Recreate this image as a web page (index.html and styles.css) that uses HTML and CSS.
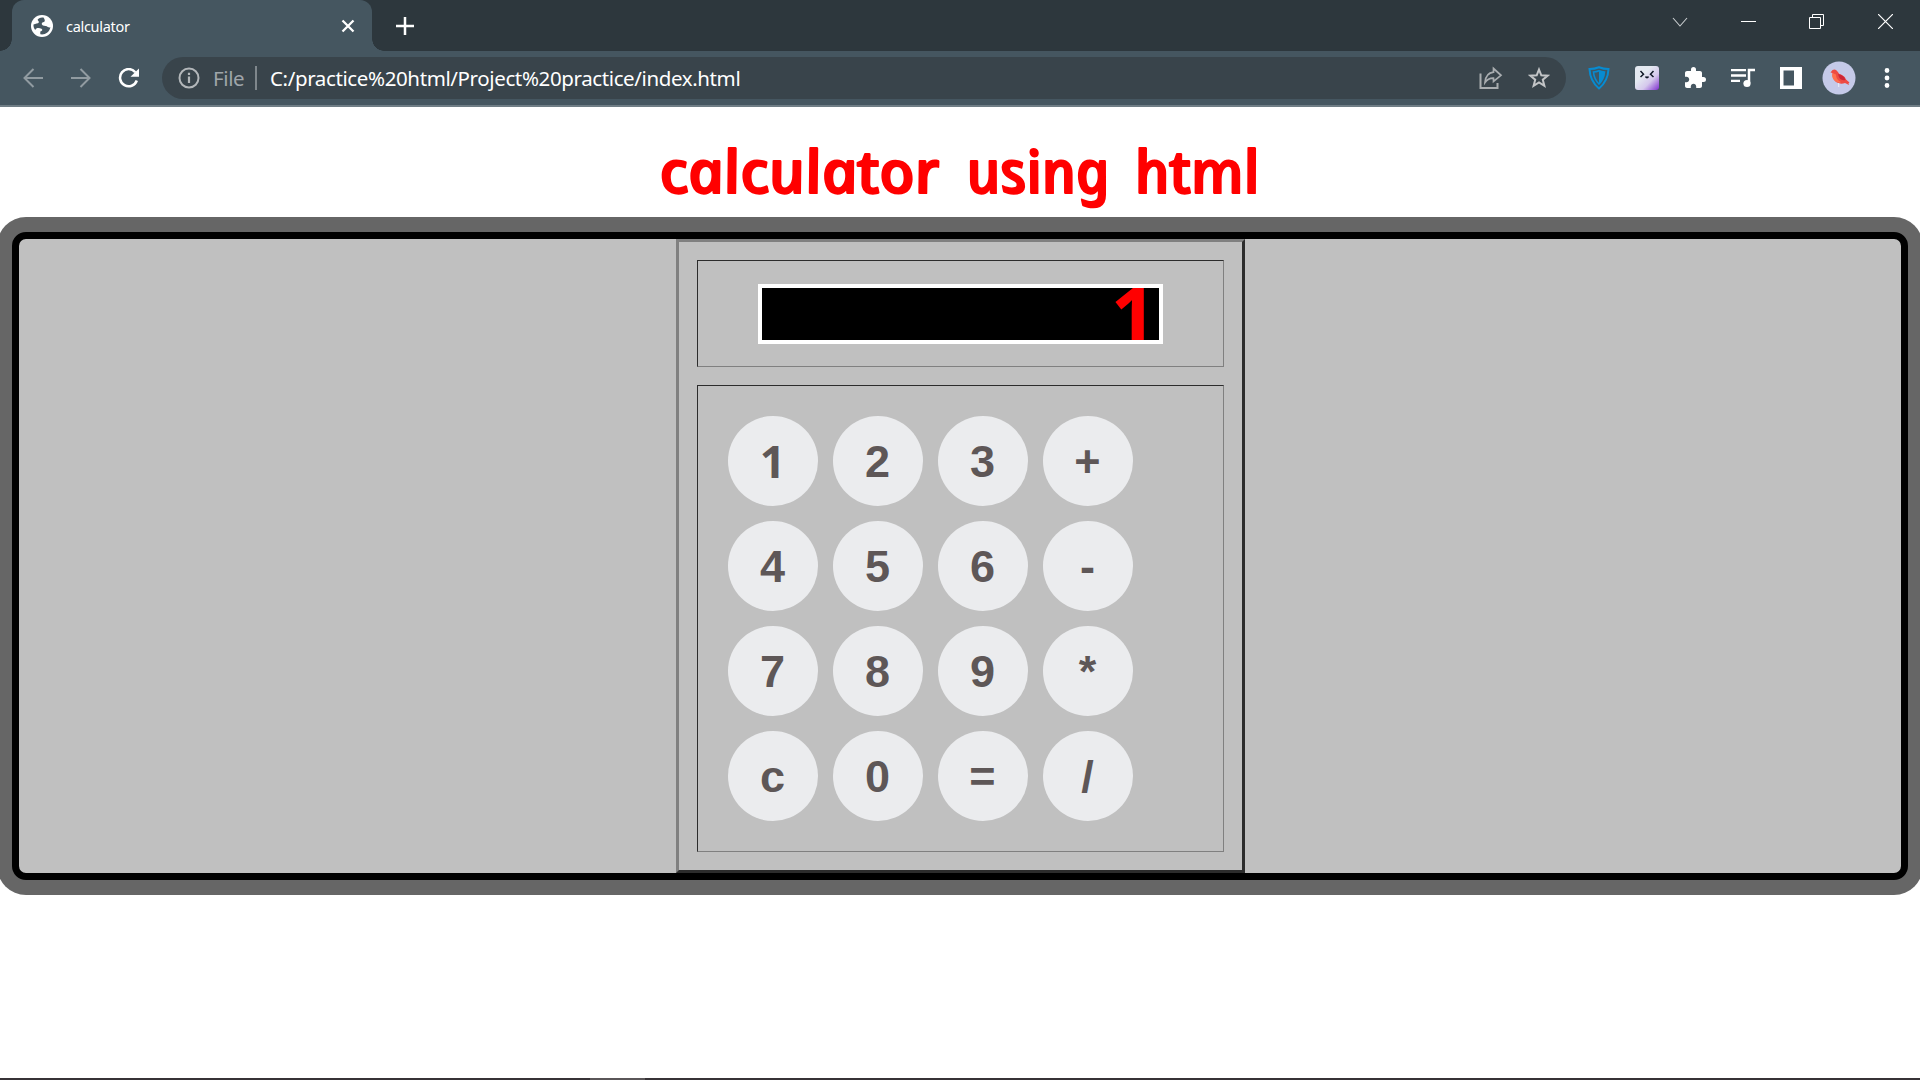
FILE: index.html
```html
<!DOCTYPE html>
<html lang="en">
<head>
<meta charset="utf-8">
<title>calculator</title>
<link rel="stylesheet" href="styles.css">
</head>
<body>
<div class="browser">
  <header class="tabstrip">
    <div class="tab">
      <svg class="globe" width="22" height="22" viewBox="0 0 22 22"><circle cx="11" cy="11" r="11" fill="#fff"/><path d="M12.5 2.6C9.5 2.2 7.2 3.400 6.600 4.800C6.900 6 8.200 6.200 7.800 7.500C7.200 8.900 4.500 8.400 2.500 9.500C2.300 11.500 3 13.500 4.200 15C5 12.600 8 12.400 10.500 13.800C12 14.800 11.300 16 9.300 16.600L9.300 19.300C14 20.200 18.500 17 19.400 12.200C17.700 12.800 16.800 12 15.800 11.300C14.300 10.600 12 11.500 10.900 9.600C10.300 8 11.500 7 13 6.900C14.300 6.700 14 4.500 12.500 2.600Z" fill="#455660"/></svg>
      <span class="tab-title">calculator</span>
      <svg class="tab-close" width="14" height="14" viewBox="0 0 14 14"><path d="M1.500 1.500L12.500 12.500M12.500 1.500L1.500 12.500" stroke="#fff" stroke-width="2.300"/></svg>
    </div>
    <svg class="new-tab" width="18" height="18" viewBox="0 0 18 18"><path d="M9 0V18M0 9H18" stroke="#fff" stroke-width="2.500"/></svg>
    <div class="window-controls">
      <span><svg width="16" height="16" viewBox="0 0 16 16"><path d="M1 4L8 12L15 4" fill="none" stroke="#c8cccf" stroke-width="1.100"/></svg></span>
      <span><svg width="15" height="15" viewBox="0 0 15 15"><path d="M0 7.500H15" stroke="#fff"/></svg></span>
      <span><svg width="15" height="15" viewBox="0 0 15 15"><path d="M.5 3.500H11.500V14.500H.5ZM3.500 3.500V.5H14.500V11.500H11.500" fill="none" stroke="#fff"/></svg></span>
      <span><svg width="15" height="15" viewBox="0 0 15 15"><path d="M0 0L15 15M15 0L0 15" stroke="#fff" stroke-width="1.200"/></svg></span>
    </div>
  </header>
  <nav class="toolbar">
    <span class="tool"><svg width="20" height="20" viewBox="0 0 20 20"><path d="M20 10H1.500M10.500 1L1.500 10L10.500 19" fill="none" stroke="#919ba1" stroke-width="2"/></svg></span>
    <span class="tool"><svg width="20" height="20" viewBox="0 0 20 20"><path d="M0 10H18.500M9.500 1L18.500 10L9.500 19" fill="none" stroke="#919ba1" stroke-width="2"/></svg></span>
    <span class="tool"><svg width="22" height="20" viewBox="0 0 22 20"><path d="M17.300 4.200A8.600 8.600 0 1 0 18.800 12.500" fill="none" stroke="#fff" stroke-width="2.500"/><path d="M21 .5V8.700H12.500Z" fill="#fff"/></svg></span>
    <div class="address">
      <span class="tool"><svg width="22" height="22" viewBox="0 0 22 22"><circle cx="11" cy="11" r="9.500" fill="none" stroke="#b3b7ba" stroke-width="2"/><path d="M11 9.500V16M11 5.700V8" stroke="#b3b7ba" stroke-width="2.200"/></svg></span>
      <span class="scheme">File</span>
      <span class="divider"></span>
      <span class="url">C:/practice%20html/Project%20practice/index.html</span>
      <span class="tool"><svg width="24" height="24" viewBox="0 0 24 24"><path d="M1.500 7.500V22H18.500V17" fill="none" stroke="#a9adb0" stroke-width="2"/><path d="M14.500 2.500L22 9.300L14.500 15.500V12.200C10 12 7.800 14 6 16.500C6.400 11.500 9 6.800 14.500 6.200Z" fill="none" stroke="#a9adb0" stroke-width="1.700"/></svg></span>
      <span class="tool"><svg width="22" height="22" viewBox="0 0 22 22"><path d="M11 2.500L13.300 8.300L19.600 8.700L14.800 12.700L16.400 18.900L11 15.500L5.600 18.900L7.200 12.700L2.400 8.700L8.700 8.300Z" fill="none" stroke="#c3c5c7" stroke-width="2"/></svg></span>
    </div>
    <span class="tool"><svg width="22" height="24" viewBox="0 0 22 24"><path d="M1.500 3Q6.500 3 11 1.200Q15.500 3 20.500 3Q20 15 11 22.500Q2 15 1.500 3Z" fill="#3c5766" stroke="#078bd1" stroke-width="2"/><path d="M5.500 6Q8.500 6 11 4.800Q13.500 6 16.500 6Q16 13 11 18Q6 13 5.500 6Z" fill="#3c5766" stroke="#078bd1" stroke-width="1.600"/><path d="M11 4.800Q13.500 6 16.500 6Q16 13 11 18Z" fill="#078bd1"/></svg></span>
    <span class="tool"><svg width="24" height="24" viewBox="0 0 24 24"><defs><linearGradient id="face" x1=".35" y1=".35" x2="1" y2="1"><stop offset="0" stop-color="#e4e9f1"/><stop offset=".45" stop-color="#d5c8ec"/><stop offset="1" stop-color="#7f2fd0"/></linearGradient></defs><rect width="24" height="24" rx="3" fill="url(#face)"/><path d="M5.500 5L8.500 8.200L5.500 11M18.500 5L15.500 8.200L18.500 11M10.500 10.500Q12 12.800 13.500 10.500" fill="none" stroke="#111827" stroke-width="1.500"/></svg></span>
    <span class="tool"><svg width="24" height="24" viewBox="0 0 24 24"><path d="M20.500 11H19V7c0-1.100-.9-2-2-2h-4V3.500a2.500 2.500 0 0 0-5 0V5H4c-1.100 0-1.990.9-1.990 2v3.800H3.500c1.490 0 2.700 1.210 2.700 2.700s-1.210 2.700-2.700 2.700H2V20c0 1.100.9 2 2 2h3.800v-1.500c0-1.490 1.210-2.700 2.700-2.700s2.700 1.210 2.700 2.700V22H17c1.100 0 2-.9 2-2v-4h1.500a2.500 2.500 0 0 0 0-5z" fill="#fff"/></svg></span>
    <span class="tool"><svg width="24" height="20" viewBox="0 0 24 20"><path d="M0 2.200H15M0 7.500H15M0 12.800H9" stroke="#fff" stroke-width="2.300"/><path d="M18 15V2H24" fill="none" stroke="#fff" stroke-width="2.500"/><circle cx="16" cy="15.500" r="3.600" fill="#fff"/></svg></span>
    <span class="tool"><svg width="22" height="22" viewBox="0 0 22 22"><path d="M0 0H22V22H0ZM3.500 3.500V18.500H14V3.500Z" fill="#fff" fill-rule="evenodd"/></svg></span>
    <span class="tool"><svg width="34" height="34" viewBox="0 0 34 34"><circle cx="17" cy="17" r="16.500" fill="#c5cae9"/><path d="M8.500 11.500L10.500 9Q13.500 7.500 15.500 10.500Q16.500 13 19.500 13.800Q23 15.500 24 18.500L27.500 21.500L26.500 22.200L27 24L23 22Q18.500 24 14 21Q10 18 10.500 12Z" fill="#ee4b43"/><path d="M10.500 12Q9 18 14.500 21Q18 22.500 19 21Q14 19 14 13.500Z" fill="#ff704f"/><path d="M16 13Q22 14 23.500 19Q17.500 20.500 16 13Z" fill="#cd2638"/><path d="M16.700 22V26" stroke="#ececf7"/></svg></span>
    <span class="tool"><svg width="6" height="22" viewBox="0 0 6 22"><path d="M3 3.500h0M3 11h0M3 18.500h0" stroke="#fff" stroke-width="4.800" stroke-linecap="round"/></svg></span>
  </nav>
  <main class="page">
    <svg class="heading" width="620" height="86" viewBox="650 131 620 86" role="heading"><g transform="translate(0 193) skewX(12)"><text x="663" textLength="280" lengthAdjust="spacingAndGlyphs">calculator</text><text x="970" textLength="143" lengthAdjust="spacingAndGlyphs">using</text><text x="1138" textLength="125" lengthAdjust="spacingAndGlyphs">html</text></g></svg>
    <div class="frame">
      <div class="calculator">
        <div class="cell display-cell"><div class="display">1</div></div>
        <div class="cell keys">
          <button>1</button><button>2</button><button>3</button><button>+</button>
          <button>4</button><button>5</button><button>6</button><button>-</button>
          <button>7</button><button>8</button><button>9</button><button>*</button>
          <button>c</button><button>0</button><button>=</button><button>/</button>
        </div>
      </div>
    </div>
  </main>
  <footer class="taskbar"><span></span></footer>
</div>
</body>
</html>
```
FILE: styles.css
```css
* { box-sizing: border-box; }
body { margin: 0; overflow: hidden; background: #fff; }
svg { display: block; flex: none; }
.browser { width: 1920px; height: 1080px; display: flex; flex-direction: column; font-family: "Noto Sans", sans-serif; }

.tabstrip { height: 51px; flex: none; display: flex; align-items: center; background: #2d373d; }
.tab { position: relative; width: 360px; height: 51px; margin-left: 12px; padding: 0 17px 0 19px; display: flex; align-items: center; background: #455660; border-radius: 12px 12px 0 0; color: #fff; font-size: 14.5px; }
.tab::before, .tab::after { content: ""; position: absolute; bottom: 0; width: 12px; height: 12px; }
.tab::before { left: -12px; background: radial-gradient(circle at 0 0, #2d373d 11.5px, #455660 12px); }
.tab::after { right: -12px; background: radial-gradient(circle at 100% 0, #2d373d 11.5px, #455660 12px); }
.tab-title { margin-left: 13px; letter-spacing: -.3px; flex: 1; }
.new-tab { margin-left: 24px; }
.window-controls { margin: 0 0 8px auto; display: flex; }
.window-controls span { width: 68.700px; height: 43px; display: flex; align-items: center; justify-content: center; }

.toolbar { height: 56px; flex: none; display: flex; align-items: center; padding: 0 9px; background: #455660; border-bottom: 2px solid #6f7d85; }
.tool { width: 48px; height: 42px; flex: none; display: flex; align-items: center; justify-content: center; }
.address { width: 1404px; height: 42px; margin: 0 9px; padding: 0 3px; border-radius: 21px; display: flex; align-items: center; background: #39444b; font-size: 20.500px; }
.scheme { width: 42px; color: #9fa5a9; letter-spacing: -.4px; }
.divider { width: 2px; height: 24px; background: #7f878c; }
.url { margin-left: 13px; flex: 1; color: #fff; letter-spacing: -.38px; white-space: nowrap; }

.page { flex: 1; display: flex; flex-direction: column; align-items: center; padding-top: 24px; }
.heading { overflow: visible; }
.heading text { font: italic 500 59px "Noto Sans", sans-serif; fill: #f00; stroke: #f00; stroke-width: 2.200px; stroke-linejoin: round; }
.frame { width: 1896px; height: 648px; margin-top: 15px; flex: none; display: flex; justify-content: center; border: 7px solid #000; border-radius: 14px; background: #c0c0c0; box-shadow: 0 0 0 15px #666; }
.calculator { width: 569px; padding: 18px; display: flex; flex-direction: column; gap: 18px; border: 3px solid; border-color: #808080 #2c2c2c #2c2c2c #808080; }
.cell { border: 1px solid; border-color: #2c2c2c #808080 #808080 #2c2c2c; }
.display-cell { height: 107px; padding-top: 23px; display: flex; justify-content: center; align-items: flex-start; }
.display { width: 405px; height: 60px; border: 4px solid #fff; padding-right: 2px; overflow: hidden; background: #000; color: #f00; font: bold 80px/52px "Noto Sans", sans-serif; text-align: right; }
.keys { height: 467px; padding: 30px; display: grid; grid-template-columns: repeat(4, 90px); grid-auto-rows: 90px; gap: 15px; }
.keys button { padding: 2px 0 0; border: 0; border-radius: 50%; background: #ebecee; color: #5e5757; font: bold 45px "Liberation Sans", sans-serif; }
.keys button:first-child { padding: 0 0 2px; font-family: "Noto Sans", sans-serif; }

.taskbar { height: 2px; flex: none; padding-left: 590px; background: #373336; }
.taskbar span { display: block; width: 55px; height: 2px; background: #5a5658; }
```
